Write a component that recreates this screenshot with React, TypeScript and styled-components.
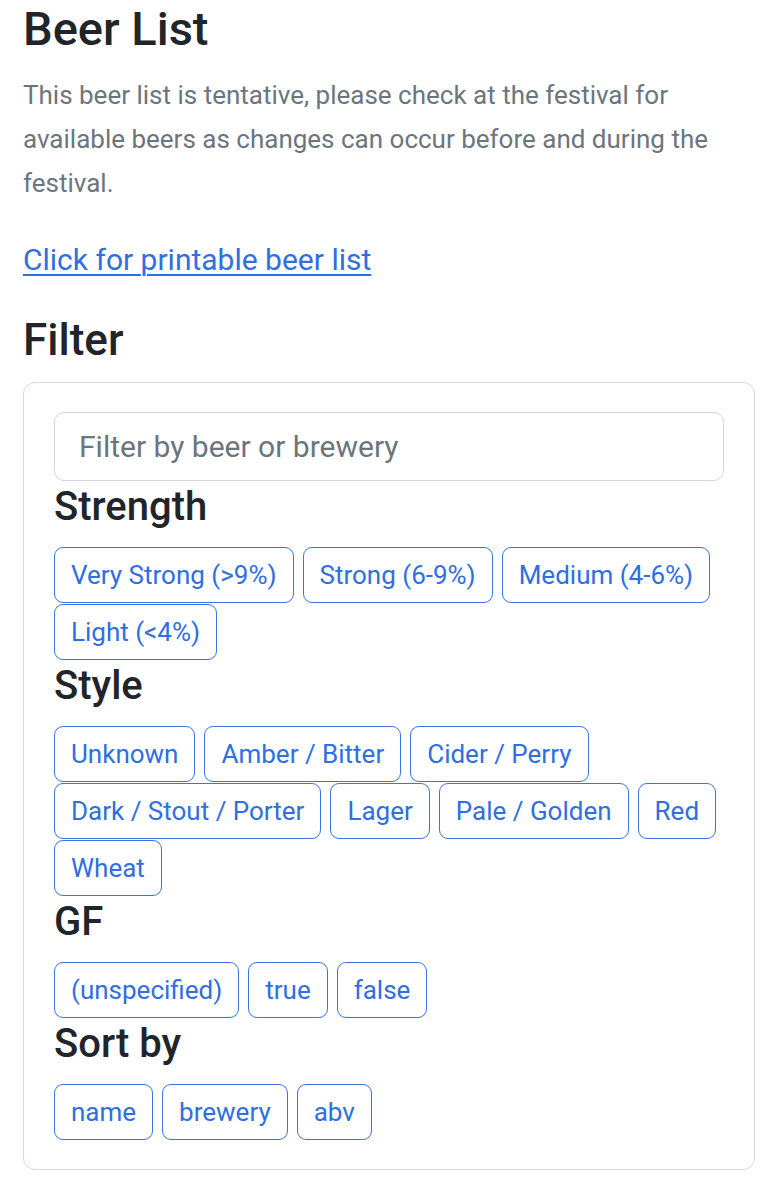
import React from "react";
import styled, { createGlobalStyle } from "styled-components";

const Global = createGlobalStyle`
  html, body { margin: 0; padding: 0; background: #fff; }
  body { font-family: Roboto, "Noto Sans", "Liberation Sans", sans-serif; color: #212529; }
  * { box-sizing: border-box; }
`;

const Page = styled.main`
  padding: 1px 23px 30px 23px;
`;

const Title = styled.h1`
  margin: 0 0 16px 0;
  font-size: 47px;
  line-height: 56px;
  font-weight: 500;
  color: #212529;
`;

const Lead = styled.p`
  margin: 0 0 33px 0;
  font-size: 26px;
  line-height: 44px;
  color: #6c757d;
`;

const PrintLink = styled.a`
  display: block;
  font-size: 30px;
  line-height: 44px;
  color: #2f6fdf;
  text-decoration: underline;
  text-underline-offset: 4px;
  text-decoration-thickness: 1.5px;
  margin-bottom: 32px;
`;

const SectionTitle = styled.h3`
  margin: 0 0 16px 0;
  font-size: 44px;
  line-height: 52px;
  font-weight: 500;
  color: #212529;
`;

const Card = styled.section`
  border: 1px solid #d9d9d9;
  border-radius: 12px;
  padding: 29px 30px 29px 30px;
  display: flex;
  flex-direction: column;
`;

const SearchInput = styled.input`
  width: 100%;
  height: 69px;
  border: 1px solid #d3d6da;
  border-radius: 10px;
  padding: 0 24px;
  font-family: inherit;
  font-size: 30px;
  color: #212529;
  outline: none;
  &::placeholder { color: #6c757d; }
`;

const GroupTitle = styled.h4`
  margin: 3px 0 17px 0;
  font-size: 40px;
  line-height: 46px;
  font-weight: 500;
  color: #212529;
`;

const ButtonRow = styled.div`
  display: flex;
  flex-wrap: wrap;
  column-gap: 9px;
  row-gap: 1px;
`;

const FilterButton = styled.button`
  height: 56px;
  padding: 0 16px;
  border: 1.5px solid #3a74e0;
  border-radius: 9px;
  background: #fff;
  color: #2f6fdf;
  font-family: inherit;
  font-size: 26px;
  line-height: 1;
  cursor: pointer;
`;

const groups: { title: string; options: string[] }[] = [
  { title: "Strength", options: ["Very Strong (>9%)", "Strong (6-9%)", "Medium (4-6%)", "Light (<4%)"] },
  {
    title: "Style",
    options: ["Unknown", "Amber / Bitter", "Cider / Perry", "Dark / Stout / Porter", "Lager", "Pale / Golden", "Red", "Wheat"],
  },
  { title: "GF", options: ["(unspecified)", "true", "false"] },
  { title: "Sort by", options: ["name", "brewery", "abv"] },
];

export default function App() {
  return (
    <>
      <Global />
      <Page>
        <Title>Beer List</Title>
        <Lead>
          This beer list is tentative, please check at the festival for available beers as changes can occur before and
          during the festival.
        </Lead>
        <PrintLink href="#">Click for printable beer list</PrintLink>
        <SectionTitle>Filter</SectionTitle>
        <Card>
          <SearchInput placeholder="Filter by beer or brewery" />
          {groups.map((g) => (
            <React.Fragment key={g.title}>
              <GroupTitle>{g.title}</GroupTitle>
              <ButtonRow>
                {g.options.map((o) => (
                  <FilterButton key={o}>{o}</FilterButton>
                ))}
              </ButtonRow>
            </React.Fragment>
          ))}
        </Card>
      </Page>
    </>
  );
}
